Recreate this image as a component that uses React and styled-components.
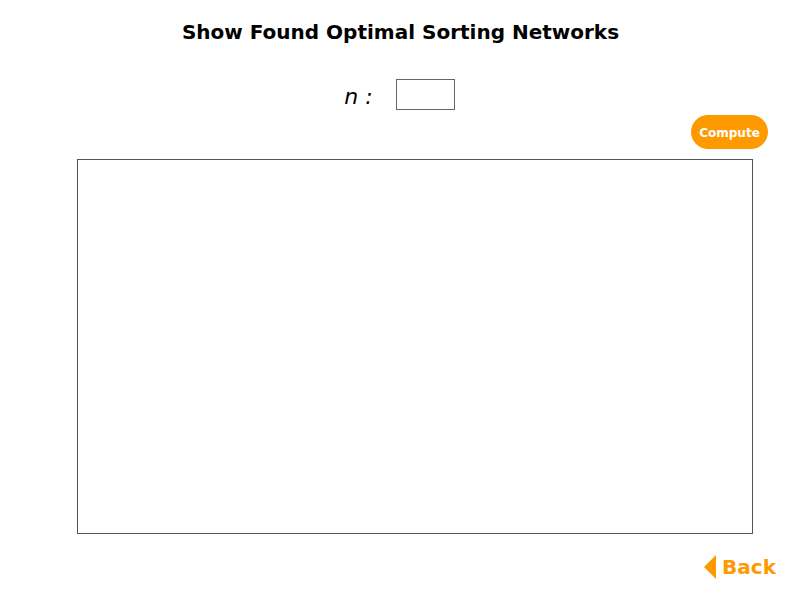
import React from "react";
import styled, { createGlobalStyle } from "styled-components";

const Global = createGlobalStyle`
  html, body { margin: 0; padding: 0; background: #fff; }
  body { font-family: "DejaVu Sans", Verdana, sans-serif; }
`;

const Page = styled.div`
  width: 797px;
  height: 593px;
  display: flex;
  flex-direction: column;
  box-sizing: border-box;
`;

const Title = styled.h1`
  margin: 0;
  padding-top: 19px;
  padding-left: 4px;
  height: 26px;
  font-size: 20px;
  line-height: 26px;
  font-weight: bold;
  text-align: center;
  color: #000;
`;

const InputRow = styled.div`
  display: flex;
  align-items: center;
  justify-content: center;
  margin-top: 34px;
  gap: 23px;
  padding-left: 2px;
`;

const Label = styled.span`
  font-style: italic;
  font-size: 22px;
  font-family: "DejaVu Sans", Verdana, sans-serif;
  color: #000;
  padding-top: 4px;
`;

const NInput = styled.input`
  width: 59px;
  height: 31px;
  box-sizing: border-box;
  border: 1px solid #666;
  padding: 0 4px;
  font-size: 14px;
  outline: none;
`;

const ButtonRow = styled.div`
  display: flex;
  justify-content: flex-end;
  padding-right: 29px;
  margin-top: 5px;
`;

const Compute = styled.button`
  width: 77px;
  height: 34px;
  border: none;
  border-radius: 17px;
  background: #ff9900;
  color: #fff;
  font-family: "DejaVu Sans", Verdana, sans-serif;
  font-weight: bold;
  font-size: 12px;
  padding: 1px 0 0;
  cursor: pointer;
`;

const Canvas = styled.div`
  margin-top: 10px;
  margin-left: 77px;
  width: 676px;
  height: 375px;
  box-sizing: border-box;
  border: 1px solid #555;
`;

const Footer = styled.div`
  display: flex;
  justify-content: flex-end;
  padding-right: 21px;
  margin-top: 21px;
`;

const BackLink = styled.a`
  display: flex;
  align-items: center;
  gap: 6px;
  color: #ff9900;
  font-weight: bold;
  font-size: 20px;
  text-decoration: none;
  cursor: pointer;
`;

export default function App() {
  return (
    <Page>
      <Global />
      <Title>Show Found Optimal Sorting Networks</Title>
      <InputRow>
        <Label>n :</Label>
        <NInput type="text" />
      </InputRow>
      <ButtonRow>
        <Compute>Compute</Compute>
      </ButtonRow>
      <Canvas />
      <Footer>
        <BackLink>
          <svg width="12" height="24" viewBox="0 0 12 24">
            <polygon points="12,0 12,24 0,12" fill="#ff9900" />
          </svg>
          Back
        </BackLink>
      </Footer>
    </Page>
  );
}
